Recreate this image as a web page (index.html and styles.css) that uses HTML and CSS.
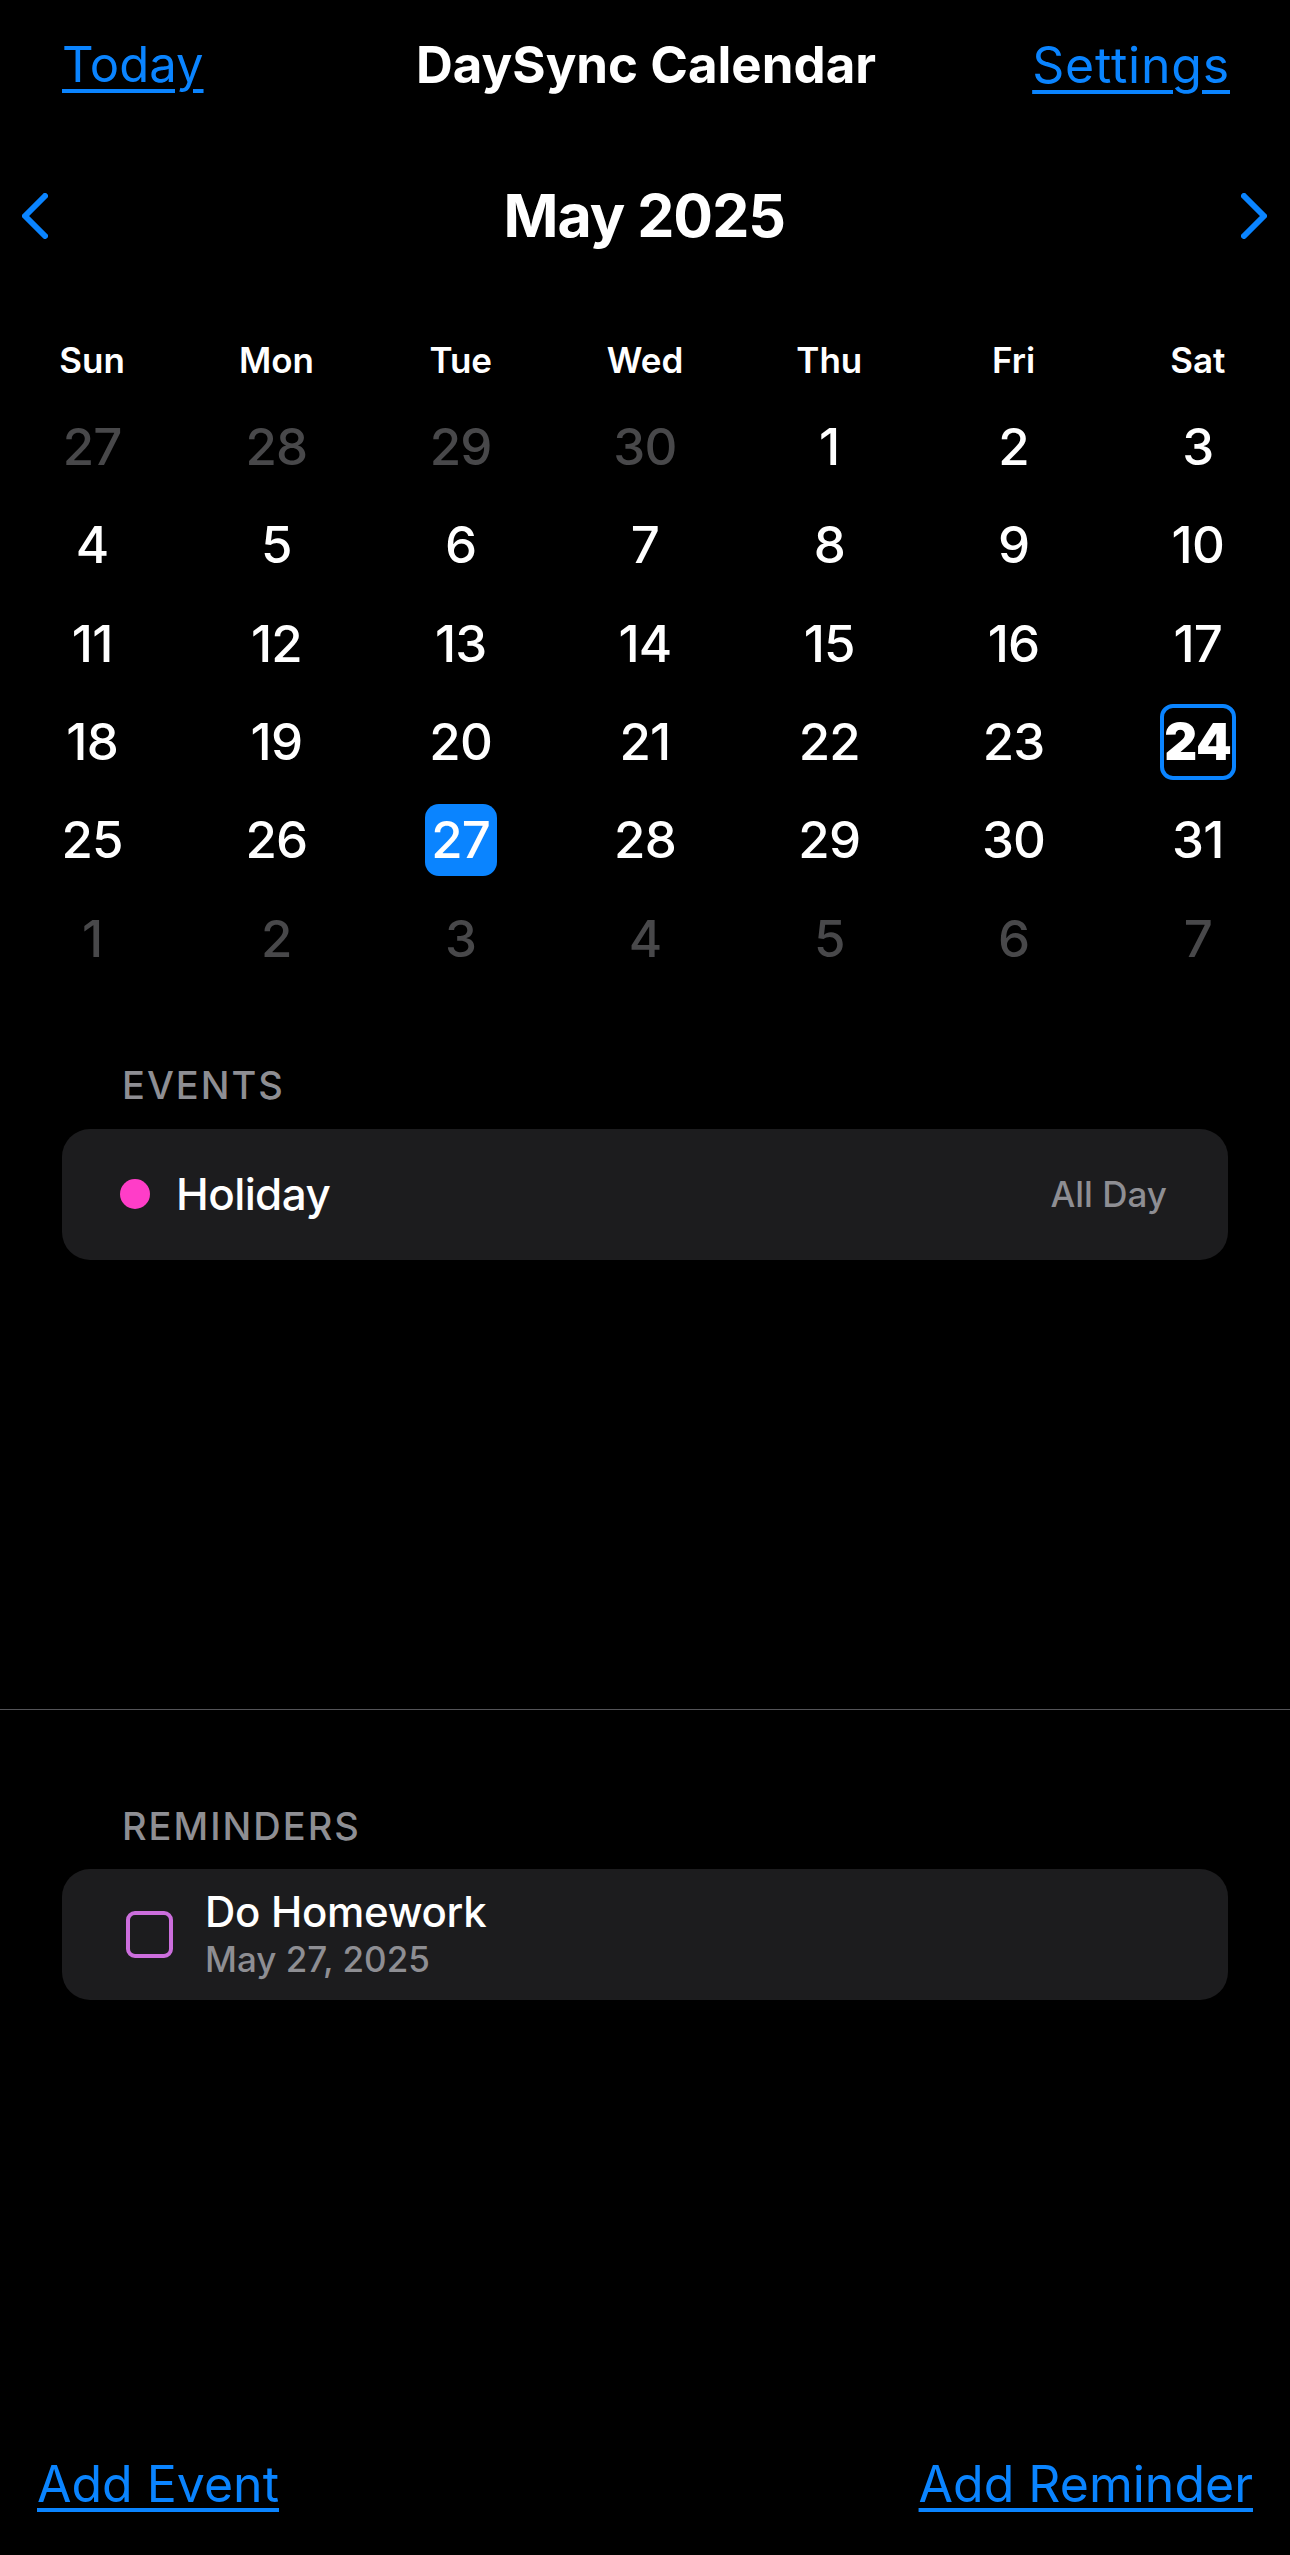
FILE: index.html
```html
<!DOCTYPE html>
<html lang="en">
<head>
<meta charset="utf-8">
<title>DaySync Calendar</title>
<link rel="stylesheet" href="styles.css">
</head>
<body>
  <header class="topbar">
    <a class="link left" href="#">Today</a>
    <h1 class="title">DaySync Calendar</h1>
    <a class="link right" href="#">Settings</a>
  </header>

  <div class="month-nav">
    <svg class="chev" width="26" height="46" viewBox="0 0 26 46" aria-hidden="true"><path d="M23 3 L3 23 L23 43" fill="none" stroke="#0A84FF" stroke-width="6" stroke-linecap="round" stroke-linejoin="round"/></svg>
    <div class="month">May 2025</div>
    <svg class="chev right" width="26" height="46" viewBox="0 0 26 46" aria-hidden="true"><path d="M3 3 L23 23 L3 43" fill="none" stroke="#0A84FF" stroke-width="6" stroke-linecap="round" stroke-linejoin="round"/></svg>
  </div>

  <div class="weekdays">
    <span>Sun</span><span>Mon</span><span>Tue</span><span>Wed</span><span>Thu</span><span>Fri</span><span>Sat</span>
  </div>

  <div class="grid">
    <div class="cell"><span class="day muted">27</span></div>
    <div class="cell"><span class="day muted">28</span></div>
    <div class="cell"><span class="day muted">29</span></div>
    <div class="cell"><span class="day muted">30</span></div>
    <div class="cell"><span class="day">1</span></div>
    <div class="cell"><span class="day">2</span></div>
    <div class="cell"><span class="day">3</span></div>

    <div class="cell"><span class="day">4</span></div>
    <div class="cell"><span class="day">5</span></div>
    <div class="cell"><span class="day">6</span></div>
    <div class="cell"><span class="day">7</span></div>
    <div class="cell"><span class="day">8</span></div>
    <div class="cell"><span class="day">9</span></div>
    <div class="cell"><span class="day">10</span></div>

    <div class="cell"><span class="day">11</span></div>
    <div class="cell"><span class="day">12</span></div>
    <div class="cell"><span class="day">13</span></div>
    <div class="cell"><span class="day">14</span></div>
    <div class="cell"><span class="day">15</span></div>
    <div class="cell"><span class="day">16</span></div>
    <div class="cell"><span class="day">17</span></div>

    <div class="cell"><span class="day">18</span></div>
    <div class="cell"><span class="day">19</span></div>
    <div class="cell"><span class="day">20</span></div>
    <div class="cell"><span class="day">21</span></div>
    <div class="cell"><span class="day">22</span></div>
    <div class="cell"><span class="day">23</span></div>
    <div class="cell"><span class="day today">24</span></div>

    <div class="cell"><span class="day">25</span></div>
    <div class="cell"><span class="day">26</span></div>
    <div class="cell"><span class="day selected">27</span></div>
    <div class="cell"><span class="day">28</span></div>
    <div class="cell"><span class="day">29</span></div>
    <div class="cell"><span class="day">30</span></div>
    <div class="cell"><span class="day">31</span></div>

    <div class="cell"><span class="day muted">1</span></div>
    <div class="cell"><span class="day muted">2</span></div>
    <div class="cell"><span class="day muted">3</span></div>
    <div class="cell"><span class="day muted">4</span></div>
    <div class="cell"><span class="day muted">5</span></div>
    <div class="cell"><span class="day muted">6</span></div>
    <div class="cell"><span class="day muted">7</span></div>
  </div>

  <h2 class="section-label events-label">EVENTS</h2>
  <div class="card event-card">
    <span class="dot"></span>
    <span class="event-name">Holiday</span>
    <span class="event-time">All Day</span>
  </div>

  <hr class="divider">

  <h2 class="section-label reminders-label">REMINDERS</h2>
  <div class="card reminder-card">
    <span class="checkbox"></span>
    <div class="reminder-text">
      <div class="reminder-title">Do Homework</div>
      <div class="reminder-date">May 27, 2025</div>
    </div>
  </div>

  <footer class="bottombar">
    <a class="link" href="#">Add Event</a>
    <a class="link" href="#">Add Reminder</a>
  </footer>
</body>
</html>
```

FILE: styles.css
```css
* {
  box-sizing: border-box;
}

html, body {
  margin: 0;
  background: #000000;
}

body {
  min-height: 100vh;
  display: flex;
  flex-direction: column;
  padding: 35px 0 41px;
  font-family: Inter, "Noto Sans", "Liberation Sans", sans-serif;
  color: #ffffff;
}

.link {
  color: #0A84FF;
  text-decoration: underline;
  text-decoration-thickness: 4px;
  text-underline-offset: 7px;
  font-weight: 400;
}

/* Header */
.topbar {
  display: grid;
  grid-template-columns: 1fr auto 1fr;
  align-items: center;
  height: 60px;
  padding: 0 60px 0 62px;
  font-size: 49px;
  line-height: 60px;
}

.topbar .left {
  justify-self: start;
}

.topbar .right {
  justify-self: end;
  font-size: 50px;
  letter-spacing: 0.8px;
}

.title {
  margin: 0;
  font-size: 51px;
  font-weight: 700;
  line-height: 60px;
  letter-spacing: 0;
}

/* Month navigation */
.month-nav {
  margin-top: 85.5px;
  height: 70px;
  display: grid;
  grid-template-columns: 1fr auto 1fr;
  align-items: center;
  padding: 0 23px 0 21.5px;
}

.chev {
  display: block;
}

.chev.right {
  justify-self: end;
}

.month {
  font-size: 59px;
  line-height: 70px;
  font-weight: 700;
  letter-spacing: -1px;
}

/* Weekdays */
.weekdays {
  margin-top: 88px;
  display: grid;
  grid-template-columns: repeat(7, 1fr);
  height: 42px;
  font-size: 35px;
  line-height: 42px;
  font-weight: 600;
  text-align: center;
}

/* Day grid */
.grid {
  margin-top: 17.5px;
  display: grid;
  grid-template-columns: repeat(7, 1fr);
  grid-auto-rows: 98.3px;
}

.cell {
  display: flex;
  align-items: center;
  justify-content: center;
}

.day {
  display: flex;
  align-items: center;
  justify-content: center;
  width: 72px;
  height: 72px;
  font-size: 51px;
  line-height: 72px;
  font-weight: 500;
  letter-spacing: -0.8px;
  color: #ffffff;
}

.day.muted {
  color: #48484A;
}

.day.selected {
  background: #0A84FF;
  border-radius: 14px;
}

.day.today {
  width: 76px;
  height: 76px;
  border: 4px solid #0A84FF;
  border-radius: 13px;
  font-weight: 900;
  letter-spacing: -0.5px;
}

/* Sections */
.section-label {
  margin: 0;
  padding-left: 122px;
  height: 46px;
  font-size: 38px;
  line-height: 46px;
  font-weight: 500;
  letter-spacing: 2px;
  color: #8E8E93;
}

.events-label {
  margin-top: 74px;
}

.reminders-label {
  margin-top: 93px;
}

.card {
  margin: 0 62px;
  height: 131px;
  background: #1C1C1E;
  border-radius: 28px;
  display: flex;
  align-items: center;
}

.event-card {
  margin-top: 21px;
  padding: 0 61px 0 58px;
}

.dot {
  width: 30px;
  height: 30px;
  border-radius: 50%;
  background: #FF3DC8;
  flex: none;
}

.event-name {
  margin-left: 26px;
  font-size: 44px;
  line-height: 54px;
  font-weight: 500;
  letter-spacing: -0.6px;
}

.event-time {
  margin-left: auto;
  font-size: 35px;
  line-height: 44px;
  font-weight: 500;
  color: #8E8E93;
}

.divider {
  margin: 449px 0 0;
  border: 0;
  height: 1px;
  background: #545458;
}

.reminder-card {
  margin-top: 20px;
  padding: 0 60px 0 64px;
}

.checkbox {
  width: 47px;
  height: 47px;
  border: 4.5px solid #CC6EDD;
  border-radius: 9px;
  flex: none;
}

.reminder-text {
  margin-left: 32px;
  display: flex;
  flex-direction: column;
}

.reminder-title {
  font-size: 42px;
  line-height: 46px;
  font-weight: 500;
  letter-spacing: -0.3px;
}

.reminder-date {
  margin-top: 3px;
  font-size: 35px;
  line-height: 42px;
  font-weight: 500;
  color: #8E8E93;
}

/* Footer */
.bottombar {
  margin-top: auto;
  height: 60px;
  display: flex;
  justify-content: space-between;
  align-items: center;
  padding: 0 37px;
  font-size: 50px;
  line-height: 60px;
}

.bottombar .link {
  text-underline-offset: 6px;
}
```
